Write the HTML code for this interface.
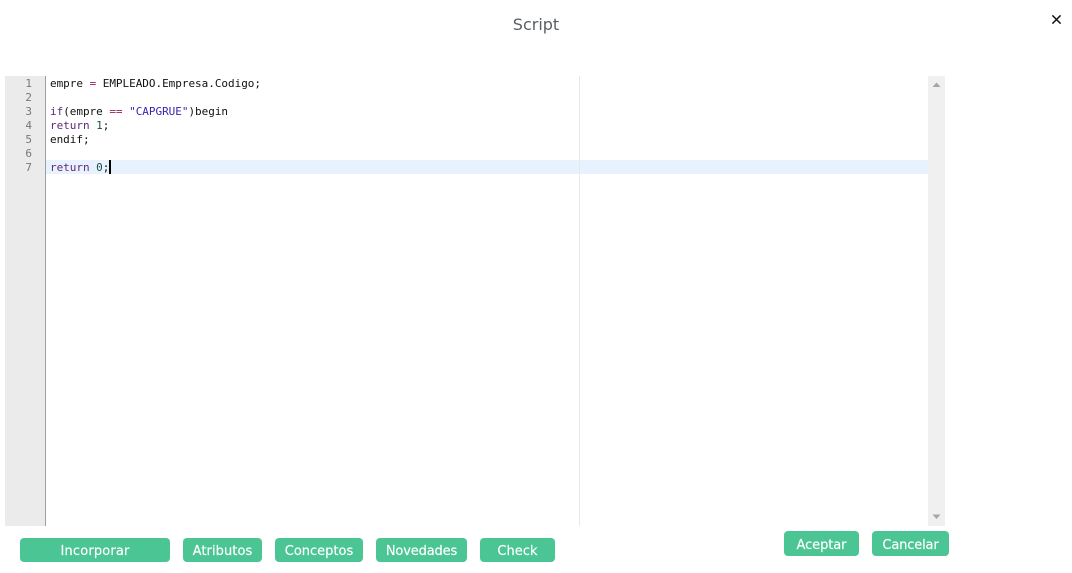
<!DOCTYPE html>
<html><head><meta charset="utf-8">
<style>
html,body{margin:0;padding:0;background:#fff;width:1072px;height:573px;overflow:hidden;position:relative;font-family:"Liberation Sans",sans-serif}
.abs{position:absolute}
.title{left:0;top:15px;width:1072px;text-align:center;font:16px/20px "DejaVu Sans",sans-serif;color:#5a5f66}
.gutter{left:5px;top:76px;width:40px;height:450px;background:#ebebeb;border-right:1px solid #a0a0a0}
.ln{left:5px;width:27px;text-align:right;font:11px/14px "DejaVu Sans Mono",monospace;color:#777;margin-top:1px}
.line{left:50px;font:11px/14px "DejaVu Sans Mono",monospace;color:#111;white-space:pre;margin-top:1px;letter-spacing:-.03px}
.kw{color:#5e2a78}.num{color:#1d4f42}.str{color:#3a1fb0}.op{color:#981a5c}
.active{left:46px;top:160px;width:882px;height:14px;background:#e8f2ff}
.margin{left:579px;top:76px;width:1px;height:450px;background:#e8e8e8}
.sb{left:928px;top:76px;width:17px;height:450px;background:#f0f0f0}
.btn{background:#4cc594;color:#fff;border-radius:4px;text-align:center;font:13px "DejaVu Sans",sans-serif;-webkit-text-stroke:.15px #fff}
</style></head><body>
<div class="abs title">Script</div>
<svg class="abs" style="left:1050px;top:13px" width="13" height="13" viewBox="0 0 13 13"><path d="M2.4 2.4L10.6 10.6M10.6 2.4L2.4 10.6" stroke="#111" stroke-width="1.5" fill="none"/></svg>
<div class="abs gutter"></div>
<div class="abs active"></div>
<div class="abs margin"></div>
<div class="abs ln" style="top:76px">1</div>
<div class="abs ln" style="top:90px">2</div>
<div class="abs ln" style="top:104px">3</div>
<div class="abs ln" style="top:118px">4</div>
<div class="abs ln" style="top:132px">5</div>
<div class="abs ln" style="top:146px">6</div>
<div class="abs ln" style="top:160px">7</div>
<div class="abs line" style="top:76px">empre <span class="op">=</span> EMPLEADO.Empresa.Codigo;</div>
<div class="abs line" style="top:104px"><span class="kw">if</span>(empre <span class="op">==</span> <span class="str">"CAPGRUE"</span>)begin</div>
<div class="abs line" style="top:118px"><span class="kw">return</span> <span class="num">1</span>;</div>
<div class="abs line" style="top:132px">endif;</div>
<div class="abs line" style="top:160px"><span class="kw">return</span> <span class="num">0</span>;</div>
<div class="abs" style="left:109px;top:160px;width:2px;height:14px;background:#000"></div>
<div class="abs sb"></div>
<svg class="abs" style="left:932px;top:82px" width="9" height="6"><path d="M4.5 0.5L8.5 5H0.5Z" fill="#a6a6a6"/></svg>
<svg class="abs" style="left:932px;top:514px" width="9" height="6"><path d="M0.5 0.5H8.5L4.5 5Z" fill="#a6a6a6"/></svg>
<div class="abs btn" style="left:20px;top:538px;width:150px;height:24px;line-height:27px;letter-spacing:.16px">Incorporar</div>
<div class="abs btn" style="left:183px;top:538px;width:79px;height:24px;line-height:27px;letter-spacing:.08px">Atributos</div>
<div class="abs btn" style="left:275px;top:538px;width:88px;height:24px;line-height:27px;letter-spacing:0">Conceptos</div>
<div class="abs btn" style="left:376px;top:538px;width:91px;height:24px;line-height:27px;letter-spacing:-.15px">Novedades</div>
<div class="abs btn" style="left:480px;top:538px;width:75px;height:24px;line-height:27px;letter-spacing:.05px">Check</div>
<div class="abs btn" style="left:784px;top:531px;width:75px;height:25px;line-height:29px;letter-spacing:-.08px">Aceptar</div>
<div class="abs btn" style="left:872px;top:531px;width:77px;height:25px;line-height:29px;letter-spacing:-.15px">Cancelar</div>
</body></html>
